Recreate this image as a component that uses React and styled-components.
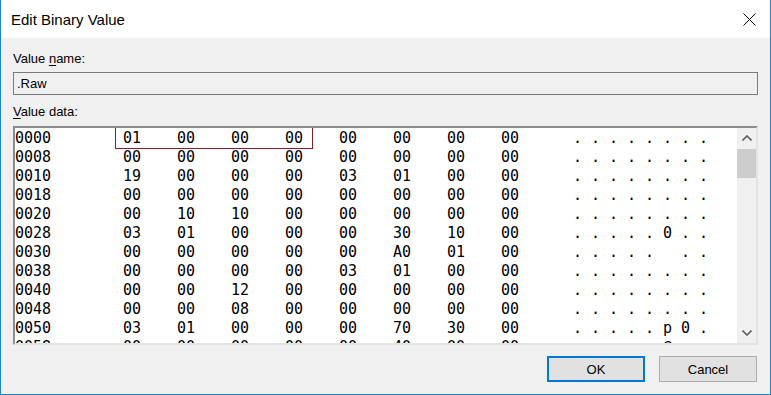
import React from "react";
import styled, { createGlobalStyle } from "styled-components";

const GlobalStyle = createGlobalStyle`
    html, body {
        margin: 0;
        padding: 0;
        background: #ffffff;
        overflow: hidden;
    }
    * {
        box-sizing: border-box;
    }
`

const rows = [
    ["0000", "01 00 00 00 00 00 00 00"],
    ["0008", "00 00 00 00 00 00 00 00"],
    ["0010", "19 00 00 00 03 01 00 00"],
    ["0018", "00 00 00 00 00 00 00 00"],
    ["0020", "00 10 10 00 00 00 00 00"],
    ["0028", "03 01 00 00 00 30 10 00"],
    ["0030", "00 00 00 00 00 A0 01 00"],
    ["0038", "00 00 00 00 03 01 00 00"],
    ["0040", "00 00 12 00 00 00 00 00"],
    ["0048", "00 00 08 00 00 00 00 00"],
    ["0050", "03 01 00 00 00 70 30 00"],
    ["0058", "00 00 00 00 00 40 00 00"],
]

// printable bytes show as themselves, A0 as a blank, the rest as a dot
const toAscii = (hex) => {
    const n = parseInt(hex, 16)
    if (n >= 0x20 && n < 0x7f) return String.fromCharCode(n)
    if (n === 0xa0) return "\u00a0"
    return "."
}

const Chevron = ({ down }) => (
    <svg width="10" height="6" viewBox="0 0 10 6">
        <polyline
            points={down ? "0.5,0.5 5,5 9.5,0.5" : "0.5,5.5 5,1 9.5,5.5"}
            fill="none"
            stroke="#606060"
            strokeWidth="1.6"
        />
    </svg>
)

export default function App() {
    return (
        <>
            <GlobalStyle />
            <Window>
                <TitleBar>
                    <Title>Edit Binary Value</Title>
                    <CloseButton>
                        <svg width="13" height="13" viewBox="0 0 13 13">
                            <path d="M0.5 0.5 L12.5 12.5 M12.5 0.5 L0.5 12.5" stroke="#000" strokeWidth="1" />
                        </svg>
                    </CloseButton>
                </TitleBar>
                <Body>
                    <Label>Value <u>n</u>ame:</Label>
                    <NameBox>.Raw</NameBox>
                    <Label $gap={9}><u>V</u>alue data:</Label>
                    <DataBox>
                        <Rows>
                            <Selection />
                            {rows.map(([addr, data]) => {
                                const bytes = data.split(" ")
                                return (
                                    <HexRow key={addr}>
                                        <span>{addr}</span>
                                        {bytes.map((b, i) => <span key={i}>{b}</span>)}
                                        <span />
                                        {bytes.map((b, i) => <span key={"a" + i}>{toAscii(b)}</span>)}
                                    </HexRow>
                                )
                            })}
                        </Rows>
                        <ScrollBar>
                            <ScrollArrow><Chevron /></ScrollArrow>
                            <Track>
                                <Thumb />
                            </Track>
                            <ScrollArrow><Chevron down /></ScrollArrow>
                        </ScrollBar>
                    </DataBox>
                    <Footer>
                        <Button $primary>OK</Button>
                        <Button>Cancel</Button>
                    </Footer>
                </Body>
            </Window>
        </>
    )
}

const Window = styled('div')`
    width: 771px;
    height: 395px;
    display: flex;
    flex-direction: column;
    border: 1px solid #1883d7;
    border-top: none;
    background-color: #f0f0f0;
    font-family: "Liberation Sans", Arial, sans-serif;
    color: #000;
`

const TitleBar = styled('div')`
    height: 38px;
    flex-shrink: 0;
    display: flex;
    align-items: center;
    justify-content: space-between;
    background-color: #fff;
    padding: 0 14px 0 10px;
`

const Title = styled('div')`
    font-size: 15px;
    line-height: 38px;
    padding-top: 1px;
`

const CloseButton = styled('div')`
    display: flex;
    align-items: center;
    margin-top: 1px;
`

const Body = styled('div')`
    flex: 1;
    display: flex;
    flex-direction: column;
    padding: 13px 12px 0 12px;
`

const Label = styled('div')`
    font-size: 13px;
    line-height: 15px;
    margin-top: ${p => p.$gap || 0}px;
    margin-bottom: 6px;
    u {
        text-decoration-thickness: 1px;
        text-underline-offset: 2px;
    }
`

const NameBox = styled('div')`
    height: 23px;
    border: 1px solid #7a7a7a;
    background-color: #f0f0f0;
    font-size: 13px;
    line-height: 21px;
    padding: 0 3px;
`

const DataBox = styled('div')`
    margin-top: 1px;
    height: 219px;
    display: flex;
    background-color: #fff;
    border-top: 2px solid #8c8c8c;
    border-left: 2px solid #8c8c8c;
    border-right: 2px solid #e3e3e3;
    border-bottom: 2px solid #e3e3e3;
`

const Rows = styled('div')`
    flex: 1;
    position: relative;
    overflow: hidden;
    padding-top: 1px;
    font-family: "DejaVu Sans Mono", "Liberation Mono", monospace;
    font-size: 15px;
`

const Selection = styled('div')`
    position: absolute;
    left: 100px;
    top: -1px;
    width: 198px;
    height: 22px;
    border: 1px solid #8b1c26;
    pointer-events: none;
`

const HexRow = styled('div')`
    display: grid;
    grid-template-columns: 108px repeat(8, 54px) 18px repeat(8, 18px);
    height: 19px;
    line-height: 19px;
    white-space: pre;
`

const ScrollBar = styled('div')`
    width: 19px;
    flex-shrink: 0;
    display: flex;
    flex-direction: column;
    background-color: #f0f0f0;
`

const ScrollArrow = styled('div')`
    height: 20px;
    display: flex;
    align-items: center;
    justify-content: center;
`

const Track = styled('div')`
    flex: 1;
    padding-top: 1px;
`

const Thumb = styled('div')`
    height: 29px;
    background-color: #cdcdcd;
`

const Footer = styled('div')`
    display: flex;
    justify-content: flex-end;
    gap: 14px;
    margin-top: 11px;
    padding-right: 1px;
`

const Button = styled('div')`
    width: 98px;
    height: 26px;
    display: flex;
    align-items: center;
    justify-content: center;
    font-size: 13px;
    background-color: #e1e1e1;
    border: ${p => p.$primary ? "2px solid #0078d7" : "1px solid #adadad"};
`
